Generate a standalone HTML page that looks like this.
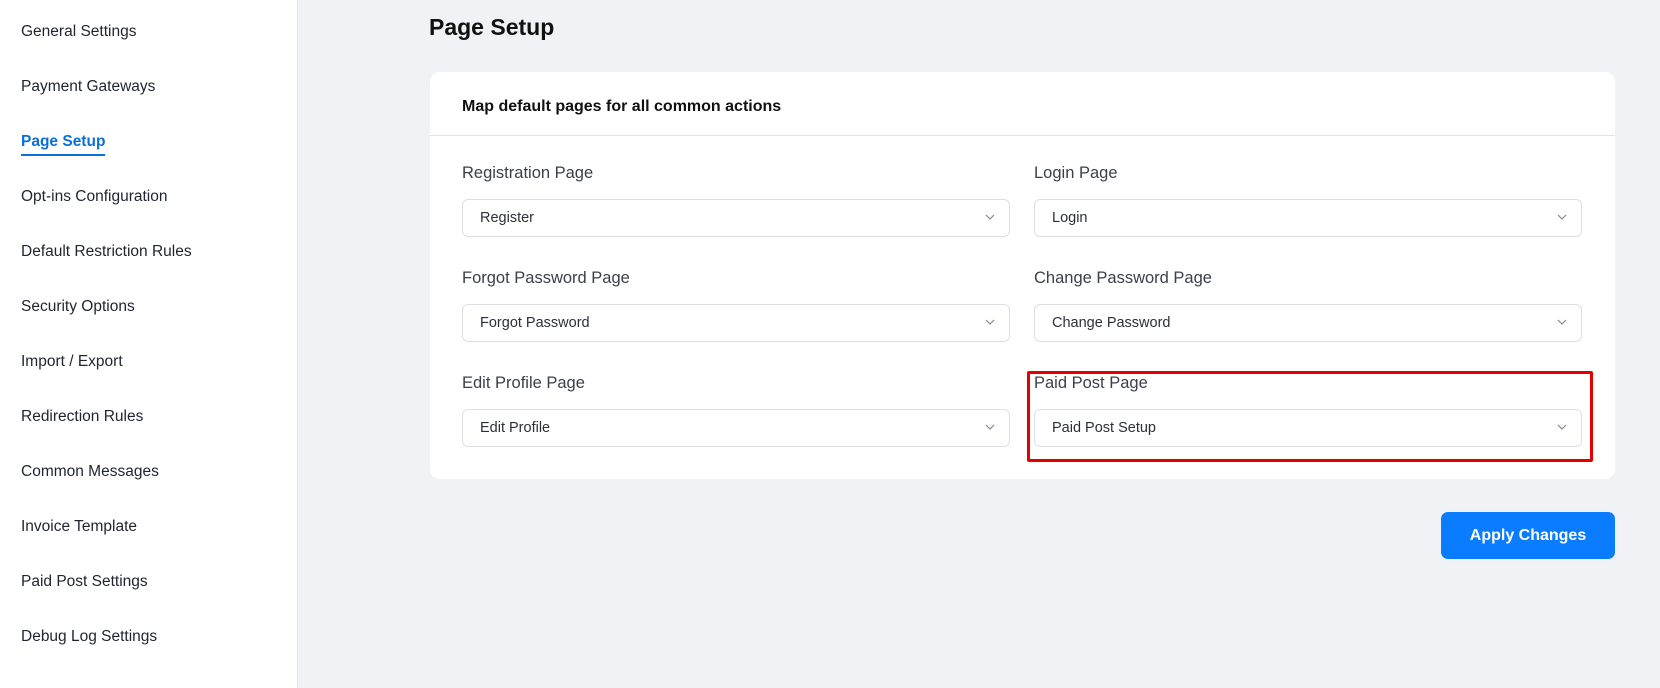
<!DOCTYPE html>
<html><head><style>
*{box-sizing:border-box;margin:0;padding:0}
body{width:1660px;height:688px;background:#f0f2f6;font-family:"Liberation Sans",sans-serif;position:relative;overflow:hidden;color:#1d2327}
.side{position:absolute;left:0;top:0;width:298px;height:688px;background:#fff;border-right:1px solid #e3e5ea}
.side div{position:absolute;left:21px;font-size:15.5px;color:#1f2430;line-height:20px}
.side .act{color:#0a6fd6;font-weight:bold;border-bottom:2.5px solid #0a6fd6;padding-bottom:2px}
h1{position:absolute;left:429px;top:14px;font-size:23px;font-weight:bold;color:#111}
.card{position:absolute;left:430px;top:72px;width:1185px;height:407px;background:#fff;border-radius:10px}
.hd{position:absolute;left:0;top:0;width:100%;height:64px;border-bottom:1px solid #e2e4e8}
.hd span{position:absolute;left:32px;top:26px;font-size:16px;font-weight:bold;color:#111}
.lbl{position:absolute;font-size:16.5px;color:#3a3f4a}
.sel{position:absolute;width:548px;height:38px;border:1px solid #dcdfe4;border-radius:6px;font-size:14.5px;color:#2c3038;padding:10px 0 0 17px}
.sel svg{position:absolute;right:14px;top:14px}
.red{position:absolute;left:1027px;top:371px;width:566px;height:91px;border:3px solid #e60000;border-radius:2px}
.btn{position:absolute;left:1441px;top:512px;width:174px;height:47px;background:#0a7cff;border-radius:7px;color:#fff;font-weight:bold;font-size:16px;text-align:center;line-height:47px}
</style></head><body>
<div class="side">
<div style="top:22px">General Settings</div>
<div style="top:77px">Payment Gateways</div>
<div class="act" style="top:132px">Page Setup</div>
<div style="top:187px">Opt-ins Configuration</div>
<div style="top:242px">Default Restriction Rules</div>
<div style="top:297px">Security Options</div>
<div style="top:352px">Import / Export</div>
<div style="top:407px">Redirection Rules</div>
<div style="top:462px">Common Messages</div>
<div style="top:517px">Invoice Template</div>
<div style="top:572px">Paid Post Settings</div>
<div style="top:627px">Debug Log Settings</div>
</div>
<h1>Page Setup</h1>
<div class="card"><div class="hd"><span>Map default pages for all common actions</span></div></div>
<div class="lbl" style="left:462px;top:164px">Registration Page</div>
<div class="lbl" style="left:1034px;top:164px">Login Page</div>
<div class="lbl" style="left:462px;top:269px">Forgot Password Page</div>
<div class="lbl" style="left:1034px;top:269px">Change Password Page</div>
<div class="lbl" style="left:462px;top:374px">Edit Profile Page</div>
<div class="lbl" style="left:1034px;top:374px">Paid Post Page</div>
<div class="sel" style="left:462px;top:199px">Register<svg width="10" height="7"><path d="M1 1l4 4 4-4" fill="none" stroke="#888" stroke-width="1.2"/></svg></div>
<div class="sel" style="left:1034px;top:199px">Login<svg width="10" height="7"><path d="M1 1l4 4 4-4" fill="none" stroke="#888" stroke-width="1.2"/></svg></div>
<div class="sel" style="left:462px;top:304px">Forgot Password<svg width="10" height="7"><path d="M1 1l4 4 4-4" fill="none" stroke="#888" stroke-width="1.2"/></svg></div>
<div class="sel" style="left:1034px;top:304px">Change Password<svg width="10" height="7"><path d="M1 1l4 4 4-4" fill="none" stroke="#888" stroke-width="1.2"/></svg></div>
<div class="sel" style="left:462px;top:409px">Edit Profile<svg width="10" height="7"><path d="M1 1l4 4 4-4" fill="none" stroke="#888" stroke-width="1.2"/></svg></div>
<div class="sel" style="left:1034px;top:409px">Paid Post Setup<svg width="10" height="7"><path d="M1 1l4 4 4-4" fill="none" stroke="#888" stroke-width="1.2"/></svg></div>
<div class="red"></div>
<div class="btn">Apply Changes</div>
</body></html>
